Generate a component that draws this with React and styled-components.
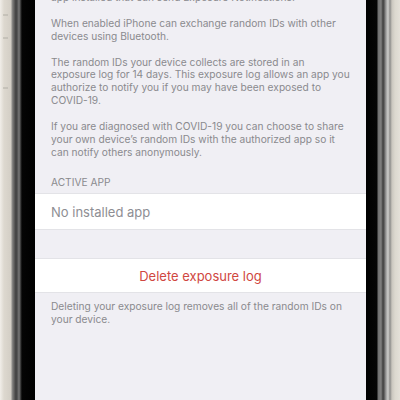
import styled, { createGlobalStyle } from 'styled-components'

const GlobalStyle = createGlobalStyle`
  html, body {
    margin: 0;
    padding: 0;
    background: #e4e0d8;
  }
  body {
    font-family: Inter, "Noto Sans", "Liberation Sans", sans-serif;
    -webkit-font-smoothing: antialiased;
  }
`

const Device = styled.div`
  display: flex;
  width: 400px;
  height: 400px;
  overflow: hidden;
`

// steel band + black bezel on the left edge of the phone
const LeftRail = styled.div`
  position: relative;
  flex: 0 0 35px;
  background: linear-gradient(
    to right,
    #f1eee9 0px,
    #ddd8cf 4px,
    #d3cec5 11px,
    #8e8d8a 12px,
    #636261 14px,
    #3e3e3e 16px,
    #5e5e5e 18px,
    #7c7c7c 19px,
    #2a2a2a 21px,
    #050505 22px,
    #000 35px
  );
`

const SideButton = styled.div`
  position: absolute;
  left: 3px;
  width: 5px;
  height: 2px;
  background: #b8b4ac;
  opacity: 0.6;
`

const RightRail = styled.div`
  flex: 0 0 34px;
  background: linear-gradient(
    to right,
    #000 0px,
    #050505 11px,
    #6e6e6e 12px,
    #808080 15px,
    #3f3f3f 17px,
    #555 18px,
    #9c9c9c 20px,
    #cfcfcd 22px,
    #8e8d8b 24px,
    #cbc7bf 26px,
    #dcd8cf 29px,
    #e4e0d8 34px
  );
`

const Screen = styled.div`
  flex: 1;
  background: #f0eff4;
  overflow: hidden;
`

const Scroll = styled.div`
  margin-top: -9px;
`

const Footnote = styled.p`
  margin: 0 0 12.9px;
  padding: 0 16px;
  font-size: 10.2px;
  line-height: 12.9px;
  color: #8a8a8e;
  white-space: pre;
`

const SectionHeader = styled.div`
  margin: 17px 0 4.5px;
  padding: 0 16px;
  font-size: 10.2px;
  line-height: 12.9px;
  color: #8a8a8e;
  text-transform: uppercase;
`

const Group = styled.div`
  background: #fff;
  border-top: 1px solid #e3e3e7;
  border-bottom: 1px solid #e3e3e7;
  margin-bottom: ${(p) => p.$gap || 0}px;
`

const Cell = styled.div`
  display: flex;
  align-items: center;
  justify-content: ${(p) => (p.$center ? 'center' : 'flex-start')};
  height: ${(p) => p.$height}px;
  padding: 0 16px;
  font-size: 13px;
  color: ${(p) => (p.$danger ? '#d0473f' : '#8e8e93')};
`

const CellFootnote = styled(Footnote)`
  margin-top: 7px;
  line-height: 12.5px;
`

export default function App() {
  return (
    <>
      <GlobalStyle />
      <Device>
        <LeftRail>
          <SideButton style={{ top: 14 }} />
          <SideButton style={{ top: 37 }} />
          <SideButton style={{ top: 87 }} />
        </LeftRail>
        <Screen>
          <Scroll>
            <Footnote>app installed that can send Exposure Notifications.</Footnote>
            <Footnote>
              {'When enabled iPhone can exchange random IDs with other\ndevices using Bluetooth.'}
            </Footnote>
            <Footnote>
              {'The random IDs your device collects are stored in an\nexposure log for 14 days. This exposure log allows an app you\nauthorize to notify you if you may have been exposed to\nCOVID-19.'}
            </Footnote>
            <Footnote style={{ marginBottom: 0 }}>
              {'If you are diagnosed with COVID-19 you can choose to share\nyour own device\u2019s random IDs with the authorized app so it\ncan notify others anonymously.'}
            </Footnote>
            <SectionHeader>Active App</SectionHeader>
            <Group $gap={28}>
              <Cell $height={35}>No installed app</Cell>
            </Group>
            <Group>
              <Cell $height={33} $center $danger>
                Delete exposure log
              </Cell>
            </Group>
            <CellFootnote>
              {'Deleting your exposure log removes all of the random IDs on\nyour device.'}
            </CellFootnote>
          </Scroll>
        </Screen>
        <RightRail />
      </Device>
    </>
  )
}
